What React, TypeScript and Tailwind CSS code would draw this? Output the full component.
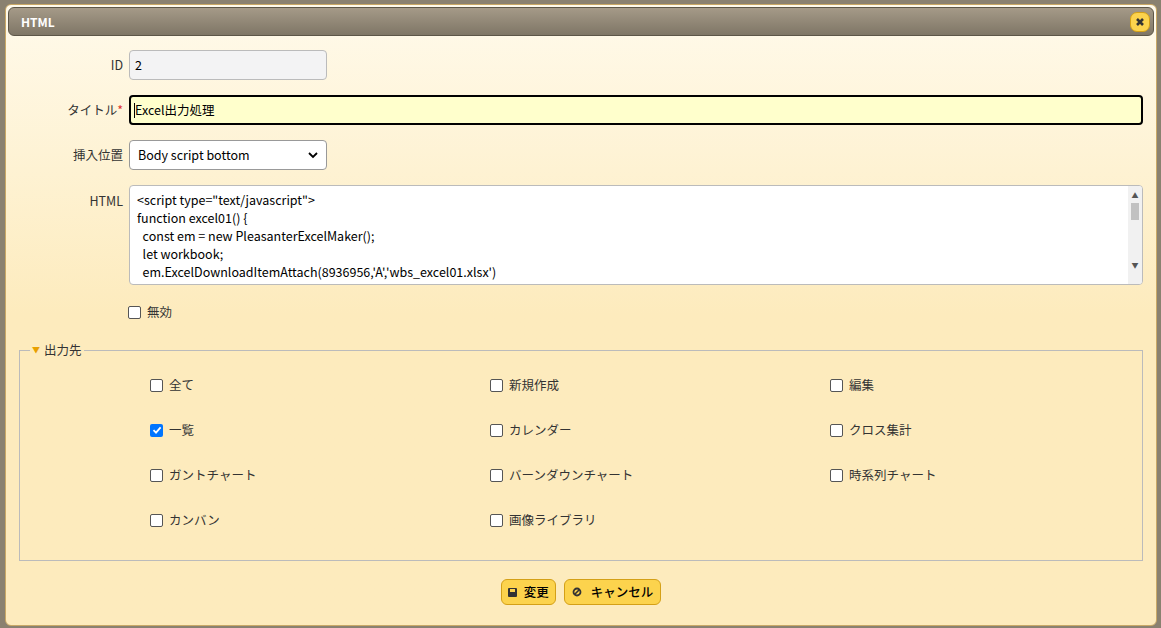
import React from "react";

const Cb = ({ label, checked }: { label: string; checked?: boolean }) => (
  <label className="flex items-center gap-[6px] h-[20px]">
    {checked ? (
      <span className="w-[13px] h-[13px] rounded-[2px] bg-[#0075ff] flex items-center justify-center">
        <svg width="10" height="10" viewBox="0 0 10 10"><path d="M1.5 5.2L4 7.6L8.6 2.4" stroke="white" strokeWidth="1.8" fill="none" /></svg>
      </span>
    ) : (
      <span className="w-[13px] h-[13px] rounded-[2px] border border-[#555] bg-white" />
    )}
    <span>{label}</span>
  </label>
);

export default function App() {
  const code = `<script type="text/javascript">
function excel01() {
  const em = new PleasanterExcelMaker();
  let workbook;
  em.ExcelDownloadItemAttach(8936956,'A','wbs_excel01.xlsx')
    .then((workbook) => {`;
  const items: [string, boolean?][] = [
    ["全て"], ["新規作成"], ["編集"],
    ["一覧", true], ["カレンダー"], ["クロス集計"],
    ["ガントチャート"], ["バーンダウンチャート"], ["時系列チャート"],
    ["カンバン"], ["画像ライブラリ"],
  ];
  return (
    <div className="w-[1161px] h-[628px] bg-[#8a8170] overflow-hidden text-[12.5px] text-[#333]" style={{ fontFamily: '"Noto Sans CJK JP","Noto Sans",sans-serif' }}>
      <div className="mt-[4px] ml-[5px] w-[1152px] h-[622px] rounded-[6px] border border-[#c9a866] bg-gradient-to-b from-[#fffaeb] via-[#fdebbd] to-[#fdebbd] p-[2px] flex flex-col">
        <div className="h-[29px] rounded-[6px] border border-[#5d5648] bg-gradient-to-b from-[#a59a88] to-[#7f7666] flex items-center justify-between pl-[12px] pr-[3px]">
          <span className="text-white font-bold text-[12px]">HTML</span>
          <span className="w-[20px] h-[20px] rounded-[7px] bg-[#fcd34d] border border-[#d4a017] flex items-center justify-center">
            <svg width="10" height="10" viewBox="0 0 10 10"><path d="M2 2L8 8M8 2L2 8" stroke="#333" strokeWidth="2.6" /></svg>
          </span>
        </div>
        <div className="flex flex-col pt-[14px]">
          <div className="flex items-center h-[30px]">
            <div className="w-[121px] text-right pr-[6px]">ID</div>
            <div className="w-[198px] h-[30px] rounded-[4px] border border-[#bbb] bg-[#f3f3f4] flex items-center px-[5px] text-black">2</div>
          </div>
          <div className="flex items-center h-[30px] mt-[15px]">
            <div className="w-[121px] text-right pr-[6px]">タイトル<span className="text-[#e03030]">*</span></div>
            <div className="w-[1014px] h-[30px] rounded-[4px] border-2 border-black bg-[#ffffcc] flex items-center px-[3px] text-black">
              <span className="w-px h-[15px] bg-black" />Excel出力処理
            </div>
          </div>
          <div className="flex items-center h-[30px] mt-[15px]">
            <div className="w-[121px] text-right pr-[6px]">挿入位置</div>
            <div className="w-[198px] h-[30px] rounded-[4px] border border-[#999] bg-white flex items-center justify-between px-[8px] text-black">
              <span>Body script bottom</span>
              <svg width="10" height="8" viewBox="0 0 10 8"><path d="M1 2L5 6L9 2" stroke="#000" strokeWidth="1.8" fill="none" /></svg>
            </div>
          </div>
          <div className="flex items-start mt-[15px]">
            <div className="w-[121px] text-right pr-[6px] pt-[7px]">HTML</div>
            <div className="w-[1014px] h-[100px] rounded-[4px] border border-[#bbb] bg-white flex overflow-hidden">
              <pre className="flex-1 px-[7px] pt-[5px] leading-[18px] text-black overflow-hidden" style={{ fontFamily: '"Noto Sans CJK JP","Noto Sans",sans-serif' }}>{code}</pre>
              <div className="w-[14px] bg-[#f1f1f1] flex flex-col items-center pt-[4px]">
                <span className="text-[7px] text-[#555]">▲</span>
                <div className="w-[8px] h-[17px] bg-[#c1c1c1] mt-[2px]" />
                <div className="flex-1" />
                <span className="text-[7px] text-[#555] mb-[14px]">▼</span>
              </div>
            </div>
          </div>
          <div className="ml-[120px] mt-[17px]"><Cb label="無効" /></div>
          <div className="mx-[11px] mt-[28px] h-[211px] border border-[#bbb] relative">
            <div className="absolute -top-[10px] left-[10px] px-[2px] bg-[#fdebbd] flex items-center gap-[4px]">
              <span className="text-[#e8a000] text-[8px]">▼</span><span>出力先</span>
            </div>
            <div className="grid grid-cols-[340px_340px_1fr] gap-y-[25px] pl-[130px] pt-[24px]">
              {items.map(([l, c]) => <Cb key={l} label={l} checked={c} />)}
            </div>
          </div>
          <div className="flex justify-center gap-[8px] mt-[18px]">
            <button className="h-[26px] px-[6px] rounded-[6px] border border-[#d4a017] bg-[#fcd34d] flex items-center gap-[7px] text-black font-medium">
              <svg width="9" height="9" viewBox="0 0 9 9"><rect x="0" y="0" width="9" height="9" rx="1" fill="#333" /><rect x="2" y="1" width="5" height="3" fill="#fcd34d" /></svg>変更
            </button>
            <button className="h-[26px] px-[7px] rounded-[6px] border border-[#d4a017] bg-[#fcd34d] flex items-center gap-[9px] text-black font-medium">
              <svg width="10" height="10" viewBox="0 0 10 10"><circle cx="5" cy="5" r="3.5" stroke="#333" strokeWidth="1.8" fill="none" /><path d="M2.5 7.5L7.5 2.5" stroke="#333" strokeWidth="1.6" /></svg>キャンセル
            </button>
          </div>
        </div>
      </div>
    </div>
  );
}
